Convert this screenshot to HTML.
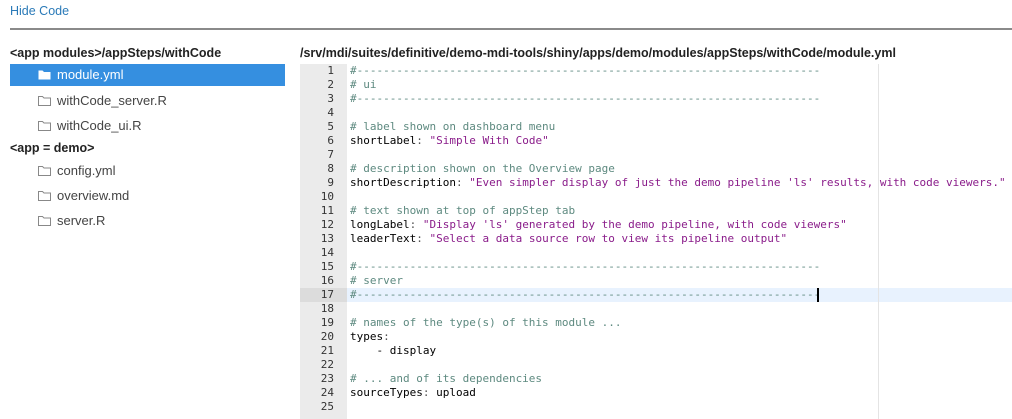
<!DOCTYPE html>
<html><head><style>
body{margin:0;width:1012px;height:419px;overflow:hidden;background:#fff;font-family:"Liberation Sans",sans-serif;position:relative}
.a{position:absolute}
#hide{left:10px;top:4px;font-size:12.5px;color:#2a7ab8}
#hr{left:10px;top:28px;width:1002px;height:2px;background:#8a8a8a}
.h{font-weight:bold;font-size:12.5px;color:#222;white-space:nowrap}
.row{left:10px;width:275px;height:22px;font-size:13px;color:#444;line-height:22px}
.row svg{position:absolute;left:28px;top:5px}
.row span{position:absolute;left:47px}
.sel{background:#358fe0;color:#fff}
#ed{left:300px;top:64px;width:712px;height:355px;background:#fff}
#gut{left:0;top:0;width:47px;height:355px;background:#ebebeb}
#pm{left:578px;top:0;width:1px;height:355px;background:#e4e4e4}
#al{left:0;top:224px;width:712px;height:14px;background:#e8f2fe}
#alg{left:0;top:224px;width:47px;height:14px;background:#dcdcdc}
pre{margin:0;font-family:"DejaVu Sans Mono",monospace;font-size:11px;line-height:14px;position:absolute;top:0}
#nums{left:0;width:34px;text-align:right;color:#333}
#code{left:50px;color:#000}
.c{color:#5e8a80}.s{color:#8a1c8a}.p{color:#555}
#cur{left:517px;top:224px;width:2px;height:14px;background:#000}
</style></head><body>
<div class="a" id="hide">Hide Code</div>
<div class="a" id="hr"></div>
<div class="a h" style="left:10px;top:46px">&lt;app modules&gt;/appSteps/withCode</div>
<div class="a h" style="left:300px;top:46px">/srv/mdi/suites/definitive/demo-mdi-tools/shiny/apps/demo/modules/appSteps/withCode/module.yml</div>
<div class="a row sel" style="top:64px"><svg width="13" height="11"><path d="M0.5 1.5h4l1.5 1.5h6.5v7.5h-12z" fill="#fff"/></svg><span>module.yml</span></div>
<div class="a row" style="top:90px"><svg width="13" height="11"><path d="M0.5 1.5h4l1.5 1.5h6.5v7.5h-12z" fill="none" stroke="#888"/></svg><span>withCode_server.R</span></div>
<div class="a row" style="top:115px"><svg width="13" height="11"><path d="M0.5 1.5h4l1.5 1.5h6.5v7.5h-12z" fill="none" stroke="#888"/></svg><span>withCode_ui.R</span></div>
<div class="a h" style="left:10px;top:141px">&lt;app = demo&gt;</div>
<div class="a row" style="top:160px"><svg width="13" height="11"><path d="M0.5 1.5h4l1.5 1.5h6.5v7.5h-12z" fill="none" stroke="#888"/></svg><span>config.yml</span></div>
<div class="a row" style="top:185px"><svg width="13" height="11"><path d="M0.5 1.5h4l1.5 1.5h6.5v7.5h-12z" fill="none" stroke="#888"/></svg><span>overview.md</span></div>
<div class="a row" style="top:210px"><svg width="13" height="11"><path d="M0.5 1.5h4l1.5 1.5h6.5v7.5h-12z" fill="none" stroke="#888"/></svg><span>server.R</span></div>
<div class="a" id="ed">
<div class="a" id="gut"></div>
<div class="a" id="al"></div>
<div class="a" id="alg"></div>
<div class="a" id="pm"></div>
<pre id="nums">1
2
3
4
5
6
7
8
9
10
11
12
13
14
15
16
17
18
19
20
21
22
23
24
25</pre>
<pre id="code"><span class="c">#----------------------------------------------------------------------</span>
<span class="c"># ui</span>
<span class="c">#----------------------------------------------------------------------</span>

<span class="c"># label shown on dashboard menu</span>
shortLabel<span class="p">:</span> <span class="s">"Simple With Code"</span>

<span class="c"># description shown on the Overview page</span>
shortDescription<span class="p">:</span> <span class="s">"Even simpler display of just the demo pipeline 'ls' results, with code viewers."</span>

<span class="c"># text shown at top of appStep tab</span>
longLabel<span class="p">:</span> <span class="s">"Display 'ls' generated by the demo pipeline, with code viewers"</span>
leaderText<span class="p">:</span> <span class="s">"Select a data source row to view its pipeline output"</span>

<span class="c">#----------------------------------------------------------------------</span>
<span class="c"># server</span>
<span class="c">#----------------------------------------------------------------------</span>

<span class="c"># names of the type(s) of this module ...</span>
types<span class="p">:</span>
    - display

<span class="c"># ... and of its dependencies</span>
sourceTypes<span class="p">:</span> upload
</pre>
<div class="a" id="cur"></div>
</div>
</body></html>
